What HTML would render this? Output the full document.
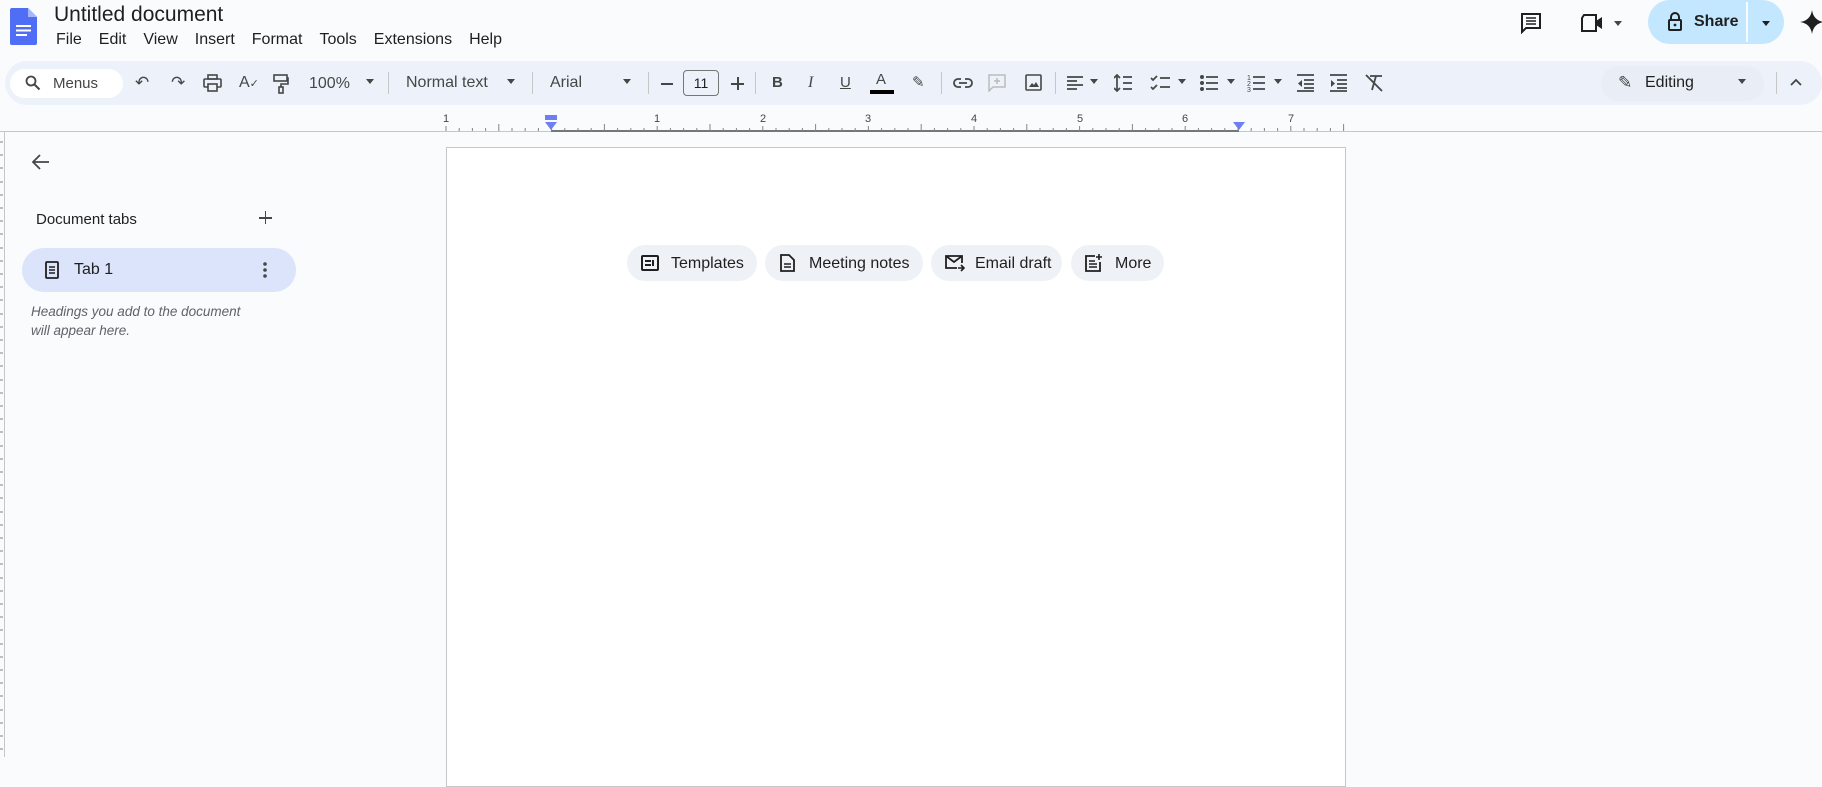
<!DOCTYPE html><html><head><meta charset="utf-8"><style>
*{box-sizing:border-box;margin:0;padding:0}
body{width:1822px;height:757px;overflow:hidden;background:#f9fbfd;font-family:"Liberation Sans",Arial,sans-serif;color:#1f1f1f;position:relative}
.a{position:absolute}
.t{font-size:15px;color:#444746;white-space:nowrap}
.sep{position:absolute;top:72px;width:1px;height:22px;background:#c7c7c7}
.ic{position:absolute;top:74px;font-size:17px;color:#444746;line-height:18px}
.dd{position:absolute;top:79px;width:0;height:0;border-left:4px solid transparent;border-right:4px solid transparent;border-top:5px solid #444746}
.chip{position:absolute;top:245px;height:36px;border-radius:18px;background:#eef1f6;font-size:16px;color:#1f1f1f;line-height:37px;padding-left:44px}
.chip svg{position:absolute;left:14px;top:9px}
.mn span{margin-right:17px}
</style></head><body>
<svg class="a" style="left:10px;top:8px" width="27" height="37" viewBox="0 0 27 37"><path d="M2 0h16l9 9v26a2 2 0 0 1-2 2H2a2 2 0 0 1-2-2V2a2 2 0 0 1 2-2z" fill="#4f6df5"/><path d="M18 0v9h9z" fill="#a6b6fb"/><rect x="6" y="17" width="15" height="2" fill="#fff"/><rect x="6" y="21.5" width="15" height="2" fill="#fff"/><rect x="6" y="26" width="11" height="2" fill="#fff"/></svg>
<div class="a" style="left:54px;top:3px;font-size:21px;color:#1f1f1f">Untitled document</div>
<div class="a mn" style="left:56px;top:31px;font-size:16px">
<span>File</span><span>Edit</span><span>View</span><span>Insert</span><span>Format</span><span>Tools</span><span>Extensions</span><span style="margin:0">Help</span></div>
<svg class="a" style="left:1520px;top:12px" width="22" height="22" viewBox="0 0 22 22"><path d="M2 2h18v14H6l-4 4z" fill="none" stroke="#1f1f1f" stroke-width="2"/><path d="M6 6h10M6 9h10M6 12h10" stroke="#1f1f1f" stroke-width="1.6"/></svg>
<svg class="a" style="left:1580px;top:13px" width="26" height="20" viewBox="0 0 26 20"><path d="M4 2h12v16H2V5z" fill="none" stroke="#1f1f1f" stroke-width="2"/><path d="M16 8l6-4v12l-6-4z" fill="#1f1f1f"/></svg>
<div class="dd" style="left:1614px;top:21px"></div>
<div class="a" style="left:1648px;top:0;width:136px;height:44px;border-radius:22px;background:#c2e7ff"></div>
<div class="a" style="left:1746px;top:2px;width:2px;height:40px;background:#f9fbfd"></div>
<svg class="a" style="left:1667px;top:12px" width="16" height="20" viewBox="0 0 16 20"><path d="M4 8V5a4 4 0 0 1 8 0v3" fill="none" stroke="#1f1f1f" stroke-width="2"/><rect x="2" y="8" width="12" height="10" rx="1" fill="none" stroke="#1f1f1f" stroke-width="2"/><circle cx="8" cy="13" r="1.4" fill="#1f1f1f"/></svg>
<div class="a" style="left:1694px;top:13px;font-size:16px;font-weight:bold;color:#1f1f1f">Share</div>
<div class="dd" style="left:1762px;top:21px;border-top-color:#1f1f1f"></div>
<svg class="a" style="left:1800px;top:10px" width="24" height="24" viewBox="0 0 24 24"><path d="M12 0C13 7 17 11 24 12 17 13 13 17 12 24 11 17 7 13 0 12 7 11 11 7 12 0z" fill="#1f1f1f"/></svg>
<div class="a" style="left:5px;top:61px;width:1817px;height:44px;border-radius:22px;background:#edf2fa"></div>
<div class="a" style="left:10px;top:69px;width:113px;height:29px;border-radius:15px;background:#fff"></div>
<svg class="a" style="left:25px;top:75px" width="16" height="16" viewBox="0 0 16 16"><circle cx="6" cy="6" r="4.5" fill="none" stroke="#444746" stroke-width="1.8"/><path d="M9.5 9.5l5 5" stroke="#444746" stroke-width="2"/></svg>
<div class="a t" style="left:53px;top:75px">Menus</div>
<div class="ic" style="left:135px">↶</div><div class="ic" style="left:171px">↷</div>
<svg class="a" style="left:203px;top:74px" width="19" height="18" viewBox="0 0 19 18"><rect x="5" y="1" width="9" height="4" fill="none" stroke="#444746" stroke-width="1.6"/><rect x="1" y="5" width="17" height="8" rx="1" fill="none" stroke="#444746" stroke-width="1.6"/><rect x="5" y="10" width="9" height="7" fill="#edf2fa" stroke="#444746" stroke-width="1.6"/></svg>
<div class="ic" style="left:239px;font-size:16px">A<span style="font-size:11px">✓</span></div>
<svg class="a" style="left:273px;top:74px" width="16" height="20" viewBox="0 0 16 20"><rect x="1" y="1" width="13" height="6" fill="none" stroke="#444746" stroke-width="1.6"/><path d="M14 4h1v6H8v3" fill="none" stroke="#444746" stroke-width="1.6"/><rect x="6" y="13" width="4" height="6" fill="none" stroke="#444746" stroke-width="1.6"/></svg>
<div class="a t" style="left:309px;top:75px;font-size:16px">100%</div><div class="dd" style="left:366px"></div>
<div class="sep" style="left:388px"></div>
<div class="a t" style="left:406px;top:74px;font-size:16px">Normal text</div><div class="dd" style="left:507px"></div>
<div class="sep" style="left:532px"></div>
<div class="a t" style="left:550px;top:74px;font-size:16px">Arial</div><div class="dd" style="left:623px"></div>
<div class="sep" style="left:648px"></div>
<div class="a" style="left:661px;top:83px;width:12px;height:2px;background:#444746"></div>
<div class="a" style="left:683px;top:70px;width:36px;height:26px;border:1px solid #747775;border-radius:4px;font-size:14px;text-align:center;line-height:24px;color:#1f1f1f">11</div>
<div class="a" style="left:731px;top:83px;width:13px;height:2px;background:#444746"></div><div class="a" style="left:736.5px;top:77px;width:2px;height:13px;background:#444746"></div>
<div class="sep" style="left:755px"></div>
<div class="ic" style="left:772px;font-weight:bold;font-size:15px">B</div>
<div class="ic" style="left:808px;font-style:italic;font-size:16px;font-family:'Liberation Serif',serif">I</div>
<div class="ic" style="left:840px;text-decoration:underline;font-size:15px">U</div>
<div class="ic" style="left:876px;font-size:15px;top:71px">A</div><div class="a" style="left:870px;top:90px;width:24px;height:4px;background:#000"></div>
<div class="ic" style="left:912px;font-size:15px">✎</div>
<div class="sep" style="left:941px"></div>
<svg class="a" style="left:953px;top:77px" width="20" height="12" viewBox="0 0 20 12"><path d="M8 2H5a4 4 0 0 0 0 8h3M12 2h3a4 4 0 0 1 0 8h-3M6 6h8" fill="none" stroke="#444746" stroke-width="1.8"/></svg>
<svg class="a" style="left:988px;top:74px" width="18" height="18" viewBox="0 0 18 18"><path d="M1 1h16v12H5l-4 4z" fill="none" stroke="#bbb" stroke-width="1.5"/><path d="M9 4v6M6 7h6" stroke="#bbb" stroke-width="1.5"/></svg>
<svg class="a" style="left:1025px;top:74px" width="17" height="17" viewBox="0 0 17 17"><rect x="1" y="1" width="15" height="15" rx="1" fill="none" stroke="#444746" stroke-width="1.6"/><path d="M4 13l3-4 2 2 2-3 3 5z" fill="#444746"/></svg>
<div class="sep" style="left:1055px"></div>
<svg class="a" style="left:1067px;top:75px" width="16" height="16" viewBox="0 0 16 16"><path d="M0 2h16M0 6h10M0 10h16M0 14h10" stroke="#444746" stroke-width="1.8"/></svg><div class="dd" style="left:1090px"></div>
<svg class="a" style="left:1114px;top:74px" width="18" height="18" viewBox="0 0 18 18"><path d="M3 1v16M0 4l3-3 3 3M0 14l3 3 3-3M9 3h9M9 9h9M9 15h9" fill="none" stroke="#444746" stroke-width="1.7"/></svg>
<svg class="a" style="left:1150px;top:74px" width="20" height="18" viewBox="0 0 20 18"><path d="M1 4l2 2 4-4M1 13l2 2 4-4M10 4h10M10 13h10" fill="none" stroke="#444746" stroke-width="1.7"/></svg><div class="dd" style="left:1178px"></div>
<svg class="a" style="left:1200px;top:74px" width="18" height="18" viewBox="0 0 18 18"><circle cx="2" cy="3" r="2" fill="#444746"/><circle cx="2" cy="9" r="2" fill="#444746"/><circle cx="2" cy="15" r="2" fill="#444746"/><path d="M6 3h12M6 9h12M6 15h12" stroke="#444746" stroke-width="1.8"/></svg><div class="dd" style="left:1227px"></div>
<svg class="a" style="left:1247px;top:73px" width="18" height="20" viewBox="0 0 18 20"><text x="0" y="7" font-size="7" fill="#444746" font-family="Liberation Sans">1</text><text x="0" y="13" font-size="7" fill="#444746" font-family="Liberation Sans">2</text><text x="0" y="19" font-size="7" fill="#444746" font-family="Liberation Sans">3</text><path d="M6 4h12M6 10h12M6 16h12" stroke="#444746" stroke-width="1.8"/></svg><div class="dd" style="left:1274px"></div>
<svg class="a" style="left:1297px;top:74px" width="17" height="18" viewBox="0 0 17 18"><path d="M0 1h17M7 6h10M7 10h10M7 14h10M0 17h17" stroke="#444746" stroke-width="1.7"/><path d="M5 6v7l-4-3.5z" fill="#444746"/></svg>
<svg class="a" style="left:1330px;top:74px" width="17" height="18" viewBox="0 0 17 18"><path d="M0 1h17M7 6h10M7 10h10M7 14h10M0 17h17" stroke="#444746" stroke-width="1.7"/><path d="M1 6v7l4-3.5z" fill="#444746"/></svg>
<svg class="a" style="left:1365px;top:74px" width="18" height="18" viewBox="0 0 18 18"><path d="M5 2h12M11 2L7 16M1 1l16 16" stroke="#444746" stroke-width="1.8"/></svg>
<div class="a" style="left:1601px;top:66px;width:163px;height:35px;border-radius:18px;background:#e9eef6"></div>
<div class="ic" style="left:1618px;font-size:17px">✎</div>
<div class="a t" style="left:1645px;top:74px;font-size:16px;color:#1f1f1f">Editing</div><div class="dd" style="left:1738px"></div>
<div class="sep" style="left:1776px"></div>
<svg class="a" style="left:1790px;top:78px" width="12" height="8" viewBox="0 0 12 8"><path d="M1 7l5-5 5 5" fill="none" stroke="#444746" stroke-width="1.8"/></svg>
<div class="a" style="left:0;top:131px;width:1822px;height:1px;background:#c7c7c7"></div>
<div class="a" style="left:551px;top:130px;width:688px;height:2px;background:#747775"></div>
<svg class="a" style="left:440px;top:113px" width="910" height="19">
<g stroke="#80868b" stroke-width="1">
<path d="M6 13v5M19.2 15v3M32.4 15v3M45.6 15v3M58.8 11v7M72 15v3M85.2 15v3M98.4 15v3M111.6 13v5M124.8 15v3M138 15v3M151.2 15v3M164.4 11v7M177.6 15v3M190.8 15v3M204 15v3M217.2 13v5M230.4 15v3M243.6 15v3M256.8 15v3M270 11v7M283.2 15v3M296.4 15v3M309.6 15v3M322.8 13v5M336 15v3M349.2 15v3M362.4 15v3M375.6 11v7M388.8 15v3M402 15v3M415.2 15v3M428.4 13v5M441.6 15v3M454.8 15v3M468 15v3M481.2 11v7M494.4 15v3M507.6 15v3M520.8 15v3M534 13v5M547.2 15v3M560.4 15v3M573.6 15v3M586.8 11v7M600 15v3M613.2 15v3M626.4 15v3M639.6 13v5M652.8 15v3M666 15v3M679.2 15v3M692.4 11v7M705.6 15v3M718.8 15v3M732 15v3M745.2 13v5M758.4 15v3M771.6 15v3M784.8 15v3M798 11v7M811.2 15v3M824.4 15v3M837.6 15v3M850.8 13v5M864 15v3M877.2 15v3M890.4 15v3M903.6 11v7"/></g>
<g font-size="11" fill="#444746" font-family="Liberation Sans" text-anchor="middle"><text x="6" y="9">1</text><text x="217" y="9">1</text><text x="323" y="9">2</text><text x="428" y="9">3</text><text x="534" y="9">4</text><text x="640" y="9">5</text><text x="745" y="9">6</text><text x="851" y="9">7</text></g>
<rect x="105" y="2" width="12" height="5" fill="#6e7ff3"/><path d="M105 9h12l-6 8z" fill="#6e7ff3"/><path d="M793 9h12l-6 8z" fill="#6e7ff3"/></svg>
<div class="a" style="left:4px;top:132px;width:1px;height:625px;background:#c7c7c7"></div>
<svg class="a" style="left:0;top:132px" width="4" height="625"><g stroke="#80868b">
<path d="M0 10h3M0 23h3M0 36h3M0 50h3M0 63h3M0 76h3M0 89h3M0 102h3M0 116h3M0 129h3M0 142h3M0 155h3M0 168h3M0 182h3M0 195h3M0 208h3M0 221h3M0 234h3M0 248h3M0 261h3M0 274h3M0 287h3M0 300h3M0 314h3M0 327h3M0 340h3M0 353h3M0 366h3M0 380h3M0 393h3M0 406h3M0 419h3M0 432h3M0 446h3M0 459h3M0 472h3M0 485h3M0 498h3M0 512h3M0 525h3M0 538h3M0 551h3M0 564h3M0 578h3M0 591h3M0 604h3M0 617h3"/></g></svg>
<svg class="a" style="left:32px;top:154px" width="18" height="16" viewBox="0 0 18 16"><path d="M17 8H2M8 1L1 8l7 7" fill="none" stroke="#444746" stroke-width="1.8"/></svg>
<div class="a" style="left:36px;top:211px;font-size:15px;color:#1f1f1f">Document tabs</div>
<div class="a" style="left:259px;top:211px;width:13px;height:13px"><div class="a" style="left:0;top:6px;width:13px;height:1.6px;background:#444746"></div><div class="a" style="left:5.7px;top:0;width:1.6px;height:13px;background:#444746"></div></div>
<div class="a" style="left:22px;top:248px;width:274px;height:44px;border-radius:22px;background:#dbe4fb"></div>
<svg class="a" style="left:45px;top:261px" width="14" height="18" viewBox="0 0 14 18"><rect x="1" y="1" width="12" height="16" rx="1" fill="none" stroke="#1f1f1f" stroke-width="1.8"/><path d="M4 6h6M4 9h6M4 12h6" stroke="#1f1f1f" stroke-width="1.5"/></svg>
<div class="a" style="left:74px;top:261px;font-size:16px;color:#1f1f1f">Tab 1</div>
<svg class="a" style="left:263px;top:261px" width="4" height="18"><circle cx="2" cy="3" r="1.8" fill="#444746"/><circle cx="2" cy="9" r="1.8" fill="#444746"/><circle cx="2" cy="15" r="1.8" fill="#444746"/></svg>
<div class="a" style="left:31px;top:302px;font-size:13.5px;font-style:italic;color:#5f6368;line-height:19px">Headings you add to the document<br>will appear here.</div>
<div class="a" style="left:446px;top:147px;width:900px;height:640px;background:#fff;border:1px solid #c7c7c7"></div>
<div class="chip" style="left:627px;width:130px">
<svg width="18" height="18" viewBox="0 0 18 18"><rect x="1" y="2" width="16" height="14" rx="1" fill="none" stroke="#1f1f1f" stroke-width="2"/><path d="M4 7h6M4 11h6M12 6v6" stroke="#1f1f1f" stroke-width="2"/></svg>Templates</div>
<div class="chip" style="left:765px;width:158px">
<svg width="16" height="18" viewBox="0 0 16 18"><path d="M2 1h8l5 5v11H2z" fill="none" stroke="#1f1f1f" stroke-width="1.8"/><path d="M5 10h7M5 13h7" stroke="#1f1f1f" stroke-width="1.6"/></svg>Meeting notes</div>
<div class="chip" style="left:931px;width:131px">
<svg width="20" height="18" viewBox="0 0 20 18"><path d="M12 14H1V2h16v7" fill="none" stroke="#1f1f1f" stroke-width="1.8"/><path d="M1 2l8 6 8-6" fill="none" stroke="#1f1f1f" stroke-width="1.8"/><path d="M13 14h6M16 11l3 3-3 3" fill="none" stroke="#1f1f1f" stroke-width="1.6"/></svg>Email draft</div>
<div class="chip" style="left:1071px;width:93px">
<svg width="18" height="18" viewBox="0 0 18 18"><path d="M10 2H1v15h14V8" fill="none" stroke="#1f1f1f" stroke-width="1.8"/><path d="M4 7h6M4 10h8M4 13h8M14 0v6M11 3h6" stroke="#1f1f1f" stroke-width="1.6"/></svg>More</div>
</body></html>
